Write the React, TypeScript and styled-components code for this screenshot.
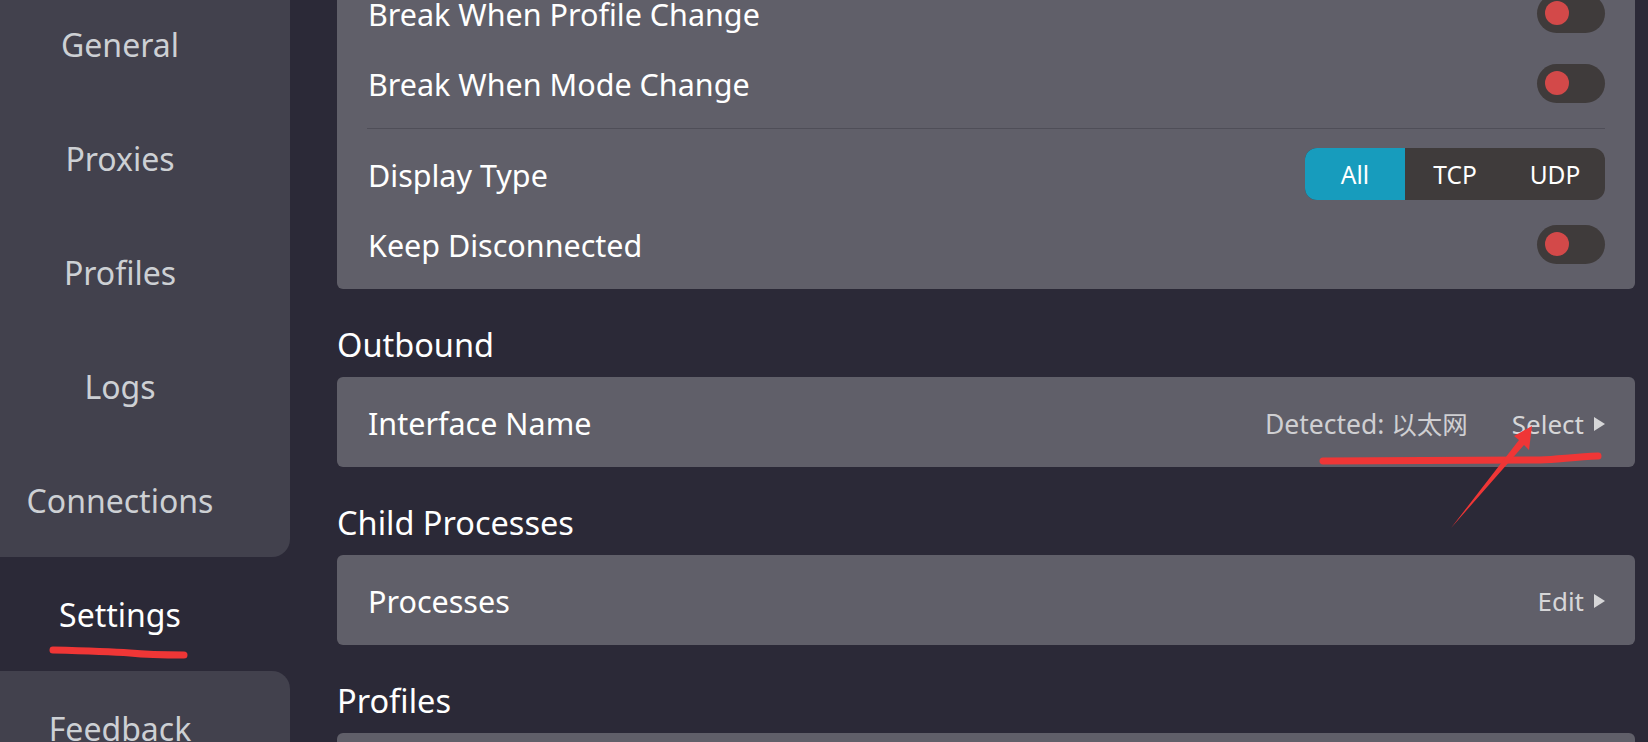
import styled, { createGlobalStyle } from "styled-components";

const GlobalStyle = createGlobalStyle`
  html, body {
    margin: 0;
    padding: 0;
    background: #2b2937;
    overflow: hidden;
  }
  body {
    font-family: "Noto Sans", "Open Sans", "Noto Sans CJK SC", sans-serif;
    color: #ffffff;
  }
`;

const navTop = ["General", "Proxies", "Profiles", "Logs", "Connections"];

function Toggle() {
  return (
    <Track>
      <Knob />
    </Track>
  );
}

function Arrow() {
  return <Tri viewBox="0 0 11 14"><path d="M0 0 L11 7 L0 14 Z" fill="#d6d6d8" /></Tri>;
}

function App() {
  return (
    <Page>
      <GlobalStyle />
      <Sidebar>
        <NavPanel>
          {navTop.map((item) => (
            <NavItem key={item}>{item}</NavItem>
          ))}
        </NavPanel>
        <NavItem $active>Settings</NavItem>
        <NavPanel $bottom>
          <NavItem>Feedback</NavItem>
        </NavPanel>
      </Sidebar>

      <Main>
        <Card $first>
          <Row>
            <Label>Break When Profile Change</Label>
            <Toggle />
          </Row>
          <Row>
            <Label>Break When Mode Change</Label>
            <Toggle />
          </Row>
          <Divider />
          <Row>
            <Label>Display Type</Label>
            <Segmented>
              <Segment $active>All</Segment>
              <Segment>TCP</Segment>
              <Segment>UDP</Segment>
            </Segmented>
          </Row>
          <Row>
            <Label>Keep Disconnected</Label>
            <Toggle />
          </Row>
        </Card>

        <SectionTitle>Outbound</SectionTitle>
        <Card>
          <TallRow>
            <Label>Interface Name</Label>
            <Actions>
              <Muted>
                Detected: <Cjk>以太网</Cjk>
              </Muted>
              <LinkAction>
                Select <Arrow />
              </LinkAction>
            </Actions>
          </TallRow>
        </Card>

        <SectionTitle>Child Processes</SectionTitle>
        <Card>
          <TallRow>
            <Label>Processes</Label>
            <LinkAction>
              Edit <Arrow />
            </LinkAction>
          </TallRow>
        </Card>

        <SectionTitle>Profiles</SectionTitle>
        <Card>
          <TallRow />
        </Card>
      </Main>

      <Marks viewBox="0 0 1648 742">
        <path
          d="M53 650 C 90 651, 115 652, 130 653 C 150 655, 170 655, 184 655"
          stroke="#ef3636"
          strokeWidth="7"
          strokeLinecap="round"
          fill="none"
        />
        <path
          d="M1323 461 L 1540 460 C 1560 459, 1575 457, 1598 456"
          stroke="#ef3636"
          strokeWidth="7"
          strokeLinecap="round"
          fill="none"
        />
        <polygon
          points="1532,426 1514,436 1519,440 1451,528 1524,445 1529,450"
          fill="#ef3636"
        />
      </Marks>
    </Page>
  );
}

const Page = styled.div`
  display: flex;
  width: 1648px;
  height: 742px;
  overflow: hidden;
  background: #2b2937;
`;

const Sidebar = styled.nav`
  width: 290px;
  flex-shrink: 0;
  display: flex;
  flex-direction: column;
`;

const NavPanel = styled.div<{ $bottom?: boolean }>`
  flex-shrink: 0;
  background: #42414d;
  margin-top: ${(p) => (p.$bottom ? "0" : "-13px")};
  border-radius: ${(p) => (p.$bottom ? "0 18px 0 0" : "0 0 18px 0")};
`;

const NavItem = styled.div<{ $active?: boolean }>`
  flex-shrink: 0;
  height: 114px;
  display: flex;
  align-items: center;
  justify-content: center;
  padding-right: 50px;
  font-size: 32px;
  color: ${(p) => (p.$active ? "#ffffff" : "#cdd0d4")};
`;

const Main = styled.main`
  flex: 1;
  padding: 0 13px 0 47px;
  display: flex;
  flex-direction: column;
  min-width: 0;
`;

const Card = styled.section<{ $first?: boolean }>`
  flex-shrink: 0;
  background: #605f69;
  border-radius: 6px;
  padding: ${(p) => (p.$first ? "10px 30px" : "0 30px")};
  margin-top: ${(p) => (p.$first ? "-32px" : "0")};
`;

const Row = styled.div`
  height: 70px;
  display: flex;
  align-items: center;
  justify-content: space-between;
`;

const TallRow = styled(Row)`
  height: 90px;
`;

const Label = styled.span`
  font-size: 30.5px;
  color: #ffffff;
  padding: 2px 0 0 1px;
`;

const Divider = styled.hr`
  border: none;
  height: 1px;
  background: #4f4e58;
  margin: 10px 0;
`;

const Track = styled.div`
  width: 68px;
  height: 39px;
  border-radius: 20px;
  background: #3f3b3b;
  display: flex;
  align-items: center;
  padding-left: 8px;
  box-sizing: border-box;
`;

const Knob = styled.span`
  width: 24px;
  height: 24px;
  border-radius: 50%;
  background: #d34949;
`;

const Segmented = styled.div`
  display: flex;
  width: 300px;
  height: 52px;
  border-radius: 12px;
  overflow: hidden;
  background: #3f3b3b;
`;

const Segment = styled.div<{ $active?: boolean }>`
  flex: 1;
  display: flex;
  align-items: center;
  justify-content: center;
  font-size: 24.5px;
  color: #ffffff;
  background: ${(p) => (p.$active ? "#179cbd" : "transparent")};
`;

const SectionTitle = styled.h2`
  flex-shrink: 0;
  margin: 34px 0 10px;
  font-size: 32.5px;
  line-height: 44px;
  font-weight: 400;
  color: #ffffff;
`;

const Actions = styled.div`
  display: flex;
  align-items: center;
  gap: 44px;
  padding-top: 2px;
`;

const Muted = styled.span`
  font-size: 26.5px;
  color: #cfcfd2;
`;

const Cjk = styled.span`
  font-family: "Noto Sans CJK SC", sans-serif;
  font-size: 25.5px;
`;

const LinkAction = styled.span`
  display: flex;
  align-items: center;
  gap: 10px;
  font-size: 26px;
  color: #d6d6d8;
  padding-top: 2px;
`;

const Tri = styled.svg`
  width: 11px;
  height: 14px;
`;

const Marks = styled.svg`
  position: fixed;
  left: 0;
  top: 0;
  width: 1648px;
  height: 742px;
  pointer-events: none;
`;

export default App;
